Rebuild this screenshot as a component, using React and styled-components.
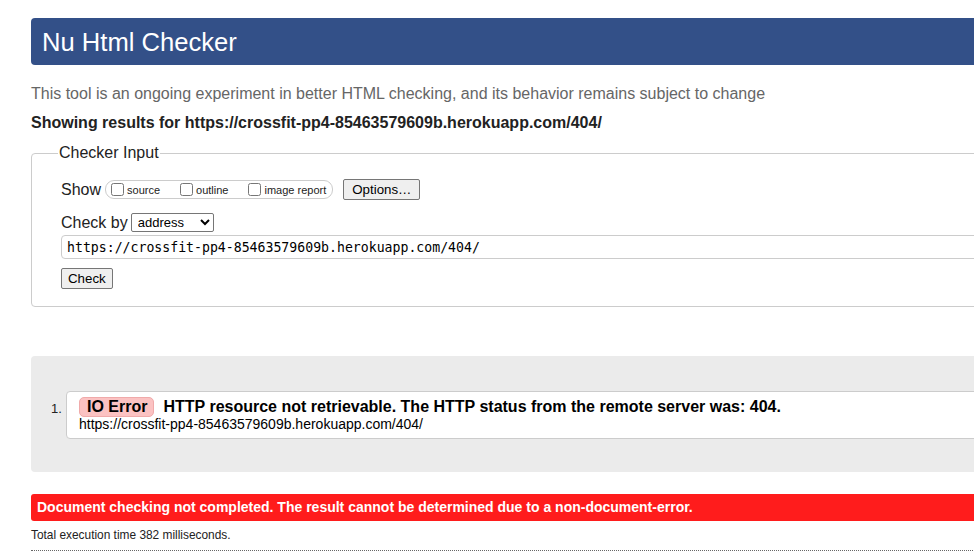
import React from "react";
import styled, { createGlobalStyle } from "styled-components";

const Global = createGlobalStyle`
  html, body { margin: 0; padding: 0; overflow: hidden; background: #fff; }
  body { font-family: "Liberation Sans", Arial, sans-serif; color: #222; }
`;

const Page = styled.div`
  width: 1120px;
  padding: 18px 0 0 31px;
  box-sizing: content-box;
`;

const Header = styled.h1`
  margin: 0;
  height: 47px;
  background: #335088;
  border-radius: 4px;
  color: #fff;
  font-weight: normal;
  font-size: 25.6px;
  line-height: 48px;
  padding: 0 0 0 11px;
`;

const Intro = styled.p`
  margin: 19px 0 0;
  font-size: 16px;
  line-height: 20px;
  color: #666;
`;

const Results = styled.p`
  margin: 9px 0 0;
  font-size: 16px;
  line-height: 20px;
  font-weight: bold;
  color: #222;
`;

const Fieldset = styled.fieldset`
  margin: 11px 0 0;
  padding: 17px 0 17px 29px;
  border: 1px solid #ccc;
  border-radius: 4px;
  display: flex;
  flex-direction: column;
`;

const Legend = styled.legend`
  font-size: 16px;
  padding: 0 1px;
  margin-left: -3px;
  color: #222;
`;

const Row = styled.div`
  display: flex;
  align-items: center;
  margin-top: ${(p) => p.$mt || 0}px;
`;

const Label = styled.span`
  font-size: 16px;
  margin-right: ${(p) => p.$mr || 0}px;
`;

const CheckGroup = styled.span`
  display: inline-flex;
  align-items: center;
  border: 1px solid #ccc;
  border-radius: 9px;
  height: 19px;
  box-sizing: border-box;
  padding: 0 6px 0 5px;
`;

const CheckItem = styled.label`
  display: inline-flex;
  align-items: center;
  font-size: 11px;
  margin-right: ${(p) => p.$mr || 0}px;
`;

const Box = styled.input`
  width: 13px;
  height: 13px;
  margin: 0 3px 0 0;
`;

const Button = styled.button`
  font-family: "Liberation Sans", Arial, sans-serif;
  font-size: 13.3px;
  height: 21px;
  padding: 0 ${(p) => p.$px || 8}px;
  border: 1px solid #767676;
  border-radius: 2px;
  background: #efefef;
  color: #000;
  margin-left: ${(p) => p.$ml || 0}px;
`;

const Select = styled.select`
  font-family: "Liberation Sans", Arial, sans-serif;
  font-size: 13px;
  height: 19px;
  width: 83px;
  padding: 0 2px;
  border: 1px solid #767676;
  border-radius: 2px;
  background: #fff;
  color: #000;
`;

const UrlInput = styled.input`
  margin-top: 3px;
  font-family: "DejaVu Sans Mono", monospace;
  font-size: 13.2px;
  height: 24px;
  box-sizing: border-box;
  padding: 0 5px;
  border: 1px solid #ccc;
  border-radius: 4px;
  color: #000;
  width: 100%;
`;

const Gap = styled.div`
  height: 49px;
`;

const ResultsBox = styled.div`
  background: #ebebeb;
  border-radius: 4px;
  padding: 35px 0 33px 20px;
`;

const List = styled.ol`
  margin: 0;
  padding: 0;
  list-style: none;
`;

const Item = styled.li`
  display: flex;
  align-items: flex-start;
`;

const Num = styled.span`
  width: 15px;
  font-size: 13px;
  padding-top: 10px;
`;

const Message = styled.div`
  flex: 1;
  background: #fff;
  border: 1px solid #ccc;
  border-radius: 4px;
  padding: 5px 12px 6px;
`;

const Head = styled.p`
  margin: 0;
  display: flex;
  align-items: center;
  font-weight: bold;
  font-size: 16px;
  color: #000;
`;

const Badge = styled.span`
  background: #fbc2c2;
  border: 1px solid #f0aaaa;
  border-radius: 5px;
  padding: 0 6px 0 7px;
  height: 18px;
  line-height: 18px;
  margin-right: 9px;
`;

const Ext = styled.p`
  margin: 0;
  font-size: 14px;
  line-height: 15px;
  color: #000;
`;

const Failure = styled.p`
  margin: 22px 0 0;
  background: #ff1c1c;
  color: #fff;
  font-weight: bold;
  font-size: 14px;
  height: 27px;
  line-height: 27px;
  padding-left: 6px;
  border-radius: 3px;
`;

const Stats = styled.p`
  margin: 7px 0 0;
  font-size: 11.9px;
  color: #222;
  padding-bottom: 8px;
  border-bottom: 1px dotted #666;
`;

export default function App() {
  return (
    <>
      <Global />
      <Page>
        <Header>Nu Html Checker</Header>
        <Intro>
          This tool is an ongoing experiment in better HTML checking, and its behavior remains subject to change
        </Intro>
        <Results>Showing results for https://crossfit-pp4-85463579609b.herokuapp.com/404/</Results>
        <Fieldset>
          <Legend>Checker Input</Legend>
          <Row>
            <Label $mr={4}>Show</Label>
            <CheckGroup>
              <CheckItem $mr={20}>
                <Box type="checkbox" />source
              </CheckItem>
              <CheckItem $mr={20}>
                <Box type="checkbox" />outline
              </CheckItem>
              <CheckItem>
                <Box type="checkbox" />image report
              </CheckItem>
            </CheckGroup>
            <Button $ml={10}>Options…</Button>
          </Row>
          <Row $mt={13}>
            <Label $mr={3}>Check by</Label>
            <Select defaultValue="address">
              <option value="address">address</option>
            </Select>
          </Row>
          <UrlInput readOnly value="https://crossfit-pp4-85463579609b.herokuapp.com/404/" />
          <Row $mt={9}>
            <Button $px={6}>Check</Button>
          </Row>
        </Fieldset>
        <Gap />
        <ResultsBox>
          <List>
            <Item>
              <Num>1.</Num>
              <Message>
                <Head>
                  <Badge>IO Error</Badge>
                  HTTP resource not retrievable. The HTTP status from the remote server was: 404.
                </Head>
                <Ext>https://crossfit-pp4-85463579609b.herokuapp.com/404/</Ext>
              </Message>
            </Item>
          </List>
        </ResultsBox>
        <Failure>
          Document checking not completed. The result cannot be determined due to a non-document-error.
        </Failure>
        <Stats>Total execution time 382 milliseconds.</Stats>
      </Page>
    </>
  );
}
